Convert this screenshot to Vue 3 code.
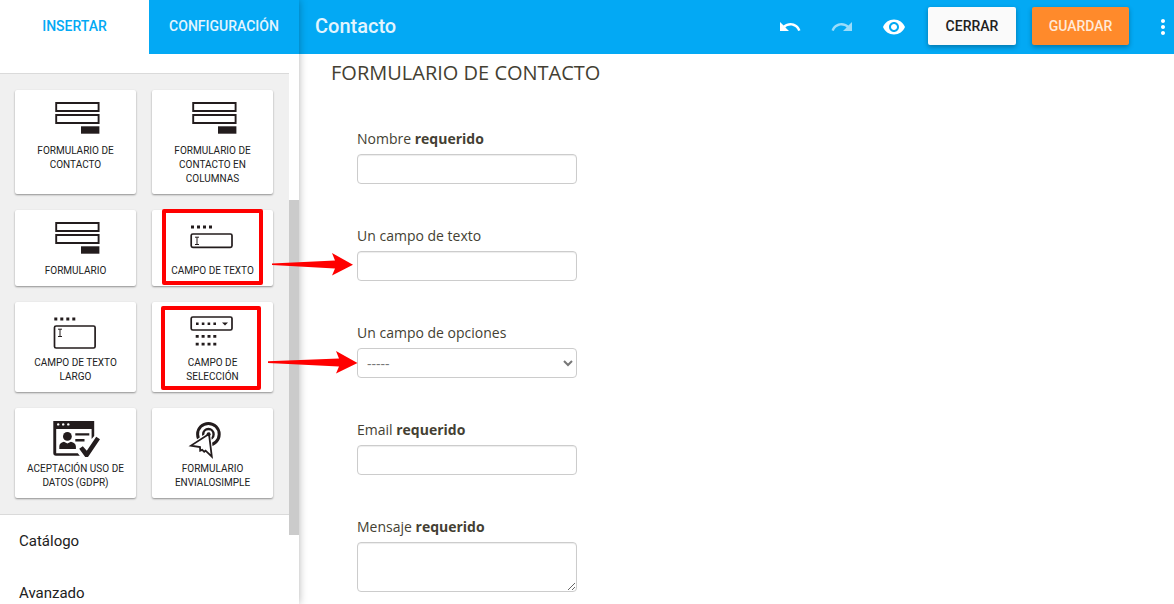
<script setup>
import { ref } from 'vue'

const cards = [
  { label: 'Formulario de contacto', icon: 'form' },
  { label: 'Formulario de contacto en columnas', icon: 'form' },
  { label: 'Formulario', icon: 'form' },
  { label: 'Campo de texto', icon: 'text' },
  { label: 'Campo de texto largo', icon: 'area' },
  { label: 'Campo de selección', icon: 'select' },
  { label: 'Aceptación uso de datos (GDPR)', icon: 'gdpr' },
  { label: 'Formulario EnvialoSimple', icon: 'target' },
]
const sections = ['Catálogo', 'Avanzado']
const fields = [
  { id: 'nombre', label: 'Nombre', required: true, type: 'text' },
  { id: 'texto', label: 'Un campo de texto', required: false, type: 'text' },
  { id: 'opciones', label: 'Un campo de opciones', required: false, type: 'select' },
  { id: 'email', label: 'Email', required: true, type: 'email' },
  { id: 'mensaje', label: 'Mensaje', required: true, type: 'area' },
]
const values = ref({ nombre: '', texto: '', opciones: '', email: '', mensaje: '' })
</script>

<template>
  <div class="app">
    <aside class="sidebar">
      <nav class="tabs">
        <button type="button" class="tab active">INSERTAR</button>
        <button type="button" class="tab">CONFIGURACIÓN</button>
      </nav>
      <div class="side-body">
        <div class="side-content">
          <div class="palette">
            <button v-for="card in cards" :key="card.label" type="button" class="card">
              <svg class="icon" viewBox="0 0 61 54" aria-hidden="true">
                <g v-if="card.icon === 'form'">
                  <path d="M11.2 13h42.4v8H11.2zM11.2 25h42.4v8H11.2z" fill="none" stroke="#231c1d" stroke-width="1.9" />
                  <path d="M36 36.3h18.4v7.4H36z" fill="#231c1d" />
                </g>
                <g v-else-if="card.icon === 'text'">
                  <path d="M9 15.4h3v3H9zm6 0h3v3h-3zm6 0h3v3h-3zm6 0h3v3h-3z" fill="#231c1d" />
                  <rect x="9.2" y="24" width="40.8" height="13.4" rx="1.6" fill="none" stroke="#231c1d" stroke-width="1.7" />
                  <path d="M13 27.2h4M13 34.5h4M15 27.2v7.3" fill="none" stroke="#231c1d" stroke-width="1" />
                </g>
                <g v-else-if="card.icon === 'area'">
                  <path d="M9.3 15.4h3v3h-3zm6 0h3v3h-3zm6 0h3v3h-3zm6 0h3v3h-3z" fill="#231c1d" />
                  <rect x="9.5" y="24" width="40.6" height="22" rx="1.6" fill="none" stroke="#231c1d" stroke-width="1.7" />
                  <path d="M13 27.2h4M13 34.5h4M15 27.2v7.3" fill="none" stroke="#231c1d" stroke-width="1" />
                </g>
                <g v-else-if="card.icon === 'select'">
                  <rect x="9.2" y="15" width="40.8" height="13" rx="1.6" fill="none" stroke="#231c1d" stroke-width="1.7" />
                  <path d="M14 20.4h2.6V23H14zm5.8 0h2.6V23h-2.6zm5.8 0h2.6V23h-2.6zm5.8 0H34V23h-2.6zM40 20.4h6L43 23.4z" fill="#231c1d" />
                  <path d="M13.7 33h3v2.8h-3zm5.9 0h3v2.8h-3zm5.9 0h3v2.8h-3zm5.8 0h3v2.8h-3zM13.7 40.8h3v2.8h-3zm5.9 0h3v2.8h-3zm5.9 0h3v2.8h-3zm5.8 0h3v2.8h-3z" fill="#231c1d" />
                </g>
                <g v-else-if="card.icon === 'gdpr'">
                  <path d="M8.3 13h40.9v15l-2.6 3V21H11.2v24.2h21.6l2 2.6H11a2.7 2.7 0 0 1-2.7-2.7z" fill="#231c1d" />
                  <g fill="#fff">
                    <circle cx="13.2" cy="16.4" r="1.2" /><circle cx="18.2" cy="16.4" r="1.2" /><circle cx="23.3" cy="16.4" r="1.2" />
                  </g>
                  <circle cx="22.4" cy="28.4" r="4.4" fill="#231c1d" />
                  <path d="M14.3 41v-2.4q0-3.8 4.6-4.8l3.5 1.8 3.5-1.8q4.8 1 5 4.8V41zM30.3 25.2h14v2.4h-14zM30.3 31h9.2v2.4h-9.2z" fill="#231c1d" />
                  <path d="M34.2 40.8l3.6-2.6 4 4.6L51.2 28.8l3.8 2.4L43 49h-2.8z" fill="#231c1d" />
                </g>
                <g v-else>
                  <circle cx="26.4" cy="26.2" r="10.8" fill="none" stroke="#231c1d" stroke-width="3" />
                  <circle cx="26.4" cy="26.2" r="5.2" fill="none" stroke="#231c1d" stroke-width="2.4" />
                  <path d="M27 26L9 37.6l9 1.4.2 3.6 2-.8 2 2 1.4-1.2L29.8 48.6z" fill="#fff" stroke="#fff" stroke-width="4" />
                  <path d="M27 26L9 37.6l9 1.4.2 3.6 2-.8 2 2 1.4-1.2L29.8 48.6z" fill="#fff" stroke="#231c1d" stroke-width="1.8" />
                  <circle cx="26.6" cy="26.2" r="2" fill="#231c1d" />
                </g>
              </svg>
              <span>{{ card.label }}</span>
            </button>
          </div>
          <button v-for="s in sections" :key="s" type="button" class="section">{{ s }}</button>
        </div>
        <div class="track"><div class="thumb"></div></div>
      </div>
    </aside>

    <main class="main">
      <header class="bar">
        <h1>Contacto</h1>
        <button type="button" class="tool" aria-label="Deshacer">
          <svg viewBox="0 0 24 24"><path d="M12.5 8c-2.65 0-5.05.99-6.9 2.6L2 7v9h9l-3.62-3.62c1.39-1.16 3.16-1.88 5.12-1.88 3.54 0 6.55 2.31 7.6 5.5l2.37-.78C21.08 11.03 17.15 8 12.5 8z" /></svg>
        </button>
        <button type="button" class="tool off" aria-label="Rehacer">
          <svg viewBox="0 0 24 24"><path d="M18.4 10.6C16.55 8.99 14.15 8 11.5 8c-4.65 0-8.58 3.03-9.96 7.22L3.9 16c1.05-3.19 4.05-5.5 7.6-5.5 1.95 0 3.73.72 5.12 1.88L13 16h9V7l-3.6 3.6z" /></svg>
        </button>
        <button type="button" class="tool preview" aria-label="Vista previa">
          <svg viewBox="0 0 24 24"><path d="M12 4.5C7 4.5 2.73 7.61 1 12c1.73 4.39 6 7.5 11 7.5s9.27-3.11 11-7.5c-1.73-4.39-6-7.5-11-7.5zM12 17c-2.76 0-5-2.24-5-5s2.24-5 5-5 5 2.24 5 5-2.24 5-5 5zm0-8c-1.66 0-3 1.34-3 3s1.34 3 3 3 3-1.34 3-3-1.34-3-3-3z" /></svg>
        </button>
        <button type="button" class="btn">CERRAR</button>
        <button type="button" class="btn save">GUARDAR</button>
        <button type="button" class="more" aria-label="Más opciones">
          <svg viewBox="0 0 24 24"><path d="M12 8c1.1 0 2-.9 2-2s-.9-2-2-2-2 .9-2 2 .9 2 2 2zm0 2c-1.1 0-2 .9-2 2s.9 2 2 2 2-.9 2-2-.9-2-2-2zm0 6c-1.1 0-2 .9-2 2s.9 2 2 2 2-.9 2-2-.9-2-2-2z" /></svg>
        </button>
      </header>
      <form class="form" @submit.prevent>
        <h2>FORMULARIO DE CONTACTO</h2>
        <div v-for="f in fields" :key="f.id" class="field">
          <label :for="f.id">{{ f.label }} <strong v-if="f.required">requerido</strong></label>
          <select v-if="f.type === 'select'" :id="f.id" v-model="values[f.id]">
            <option value="">-----</option>
          </select>
          <textarea v-else-if="f.type === 'area'" :id="f.id" v-model="values[f.id]"></textarea>
          <input v-else :id="f.id" v-model="values[f.id]" :type="f.type" />
        </div>
      </form>
    </main>

    <svg class="notes" width="370" height="400" viewBox="0 0 370 400" aria-hidden="true">
      <g fill="none" stroke="#f00" stroke-width="4" stroke-linejoin="round">
        <rect x="164" y="211" width="97" height="72" />
        <rect x="163" y="308" width="96" height="80" />
      </g>
      <path d="M272 263.4L335 260.4 332 253 353 264.7 332 275.5 335 268.4 272 265z" fill="#f00" />
      <path d="M268 361.2L339 358.6 336 351 357.5 363 336 373.5 339 366.6 268 363z" fill="#f00" />
    </svg>
  </div>
</template>

<style>
body { margin: 0; background: #fff; }
</style>

<style scoped>
* { box-sizing: border-box; }
button { font: inherit; color: inherit; border: 0; padding: 0; background: none; cursor: pointer; }
.app {
  position: relative;
  display: flex;
  height: 100vh;
  overflow: hidden;
  font-family: Roboto, "Liberation Sans", sans-serif;
  color: #212121;
}
.sidebar {
  position: relative;
  z-index: 1;
  flex: 0 0 299px;
  display: flex;
  flex-direction: column;
  background: #fff;
  box-shadow: 0 0 8px rgba(0, 0, 0, .3);
}
.tabs { display: flex; height: 54px; flex: none; }
.tab { flex: 1; padding-bottom: 2px; background: #03a9f4; color: #e3f5fe; font-size: 14px; font-weight: 500; }
.tab.active { flex: 0 0 149px; background: #fff; color: #03a9f4; }
.side-body { display: flex; flex: 1; min-height: 0; }
.side-content { flex: 1; padding-top: 19px; overflow: hidden; }
.palette {
  display: grid;
  grid-template-columns: 1fr 1fr;
  gap: 16px;
  padding: 16px 16px 16px 15px;
  background: #f0f0f0;
  border-top: 1px solid #dadada;
  border-bottom: 1px solid #dadada;
}
.card {
  display: flex;
  flex-direction: column;
  align-items: center;
  padding-bottom: 8px;
  background: #fff;
  border-radius: 2px;
  box-shadow: 0 1px 2px rgba(0, 0, 0, .4);
  font-size: 10px;
  line-height: 14px;
  text-transform: uppercase;
}
.card span { padding: 0 10px; }
.icon { width: 61px; height: 54px; }
.section {
  display: block;
  width: 100%;
  height: 52px;
  padding: 0 19px;
  font-size: 15px;
  text-align: left;
}
.track { width: 10px; }
.thumb { height: 335px; margin-top: 146px; background: #cbcbcb; }
.main { flex: 1; min-width: 0; }
.bar {
  display: flex;
  align-items: center;
  height: 54px;
  padding: 0 0 0 16px;
  background: #03a9f4;
  color: #fff;
}
.bar h1 { flex: 1; margin: 0 0 2px; font-size: 20px; font-weight: 500; color: #e3f5fe; }
.tool { display: flex; margin-right: 28px; }
.tool svg, .more svg { width: 24px; height: 24px; fill: #fff; }
.tool.off svg { opacity: .6; }
.tool.preview { margin-right: 22px; }
.btn {
  height: 38px;
  min-width: 88px;
  padding: 0 16px;
  margin: 0 16px 2px 0;
  background: #fafafa;
  color: #212121;
  border-radius: 2px;
  box-shadow: 0 2px 5px rgba(0, 0, 0, .3);
  font-size: 14px;
  font-weight: 500;
}
.btn.save { min-width: 97px; background: #ff8a2b; color: #ffe9d8; margin-right: 22px; }
.more { display: flex; width: 24px; margin-right: -1px; }
.form { padding: 5px 32px; font-family: "Open Sans", "Noto Sans", sans-serif; color: #443f33; }
.form h2 { margin: 0 0 42px; font-size: 20px; line-height: 28px; font-weight: 400; }
.field { display: flex; flex-direction: column; align-items: flex-start; gap: 5px; margin: 0 26px 42px; }
.field label { font-size: 14px; line-height: 20px; }
.field input, .field select, .field textarea {
  width: 220px;
  height: 30px;
  margin: 0;
  padding: 4px 6px;
  border: 1px solid #ccc;
  border-radius: 4px;
  background: #fff;
  color: #777;
  font: 14px/20px "Open Sans", "Noto Sans", sans-serif;
  box-shadow: inset 0 1px 1px rgba(0, 0, 0, .075);
}
.field select { padding: 4px 5px; box-shadow: none; }
.field textarea { height: 50px; }
.notes { position: absolute; z-index: 2; left: 0; top: 0; pointer-events: none; }
</style>
